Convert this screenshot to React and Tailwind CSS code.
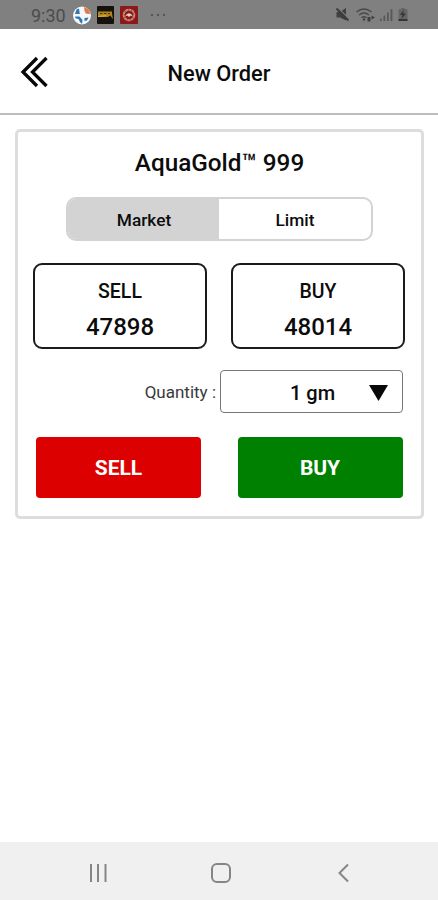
function StatusBar() {
  return (
    <div className="flex h-[29px] items-center bg-[#808080] pl-[31px] pr-[29px] text-[#4c4c4c]">
      <span className="w-[42px] pt-[2px] text-[18px] leading-none">9:30</span>
      <svg className="mt-px h-[19px] w-[18px]" viewBox="0 0 18 19">
        <circle cx="9" cy="9.5" r="9" fill="#f6f8fa" />
        <path d="M11 1l4.500 2.200L17.500 8l-4.500-.2L11.500 5z" fill="#e07b45" />
        <path d="M3.500 3.500L6 2.500l.8 5.500H2z M2 10.500h4.500l3 3.500-.5 4-2-2-1.500-3-2.800-.5z M11.500 12l4-.5-1.500 3-2.500.5z" fill="#2f76b5" />
      </svg>
      <svg className="ml-[6px] mt-px h-[18px] w-[17px]" viewBox="0 0 17 18">
        <rect width="17" height="18" rx="1" fill="#15120c" />
        <path d="M1 5.500h14v2l1 5.500-3-3.500-2 1.500H1z" fill="#b1841c" />
        <path d="M3 7.500h2.500M7 7.500h2.500M11 7.500h2" stroke="#4c3815" strokeWidth="1" />
        <path d="M1 10.500l8-.8" stroke="#dcb450" strokeWidth="1" />
      </svg>
      <svg className="ml-[6px] mt-px h-[18px] w-[18px]" viewBox="0 0 18 18">
        <rect width="18" height="18" rx="1" fill="#8c181b" />
        <circle cx="9" cy="9" r="5.300" fill="none" stroke="#c08672" strokeWidth="2" strokeDasharray="3 .4" />
        <path d="M5 10.500q4-6.500 8 0l-2.500-1-1.500 1.500-1.500-1.500z" fill="#ecd3c3" />
      </svg>
      <svg className="ml-[12px] h-[4px] w-[18px]" viewBox="0 0 18 4" fill="#555">
        <circle cx="2" cy="2" r="1.200" />
        <circle cx="8" cy="2" r="1.200" />
        <circle cx="14" cy="2" r="1.200" />
      </svg>
      <svg className="ml-auto mt-px h-[18px] w-[74px]" viewBox="0 0 74 18" fill="#404040">
        <path d="M1.500 6h3.500L11 2v12.500L5 11.500H1.500z" />
        <path d="M3 2L14.500 13.500" stroke="#808080" strokeWidth="1.300" />
        <path d="M1.500 2.500L13.500 14.500" stroke="#3a3a3a" strokeWidth="1.800" />
        <g fill="none" stroke="#484848" strokeWidth="1.400">
          <path d="M21.500 6q7.500-6 15 0M24 9q5-4 10 0M26.500 11.800q2.500-2 5 0" />
        </g>
        <circle cx="29" cy="13.500" r="1.200" />
        <path d="M32.500 11h3v4.500h-3zM36.500 9.500l3.500 2-3.500 2z" />
        <g fill="#585858">
          <path d="M45 12.500h1.700V15H45zM48.500 9.500h1.700V15h-1.700zM52 6.500h1.700V15H52z" />
          <path d="M55.500 3.200h1.900V15h-1.900z" />
        </g>
        <path d="M66 2h4v1h1.500q1 0 1 1v10q0 1-1 1h-7q-1 0-1-1V4q0-1 1-1H66z" fill="#666" />
        <path d="M69 3.500l-4 5.500h2.500l-1 4 4.500-5.500h-3zM63.500 13h9v2h-9z" fill="#353535" />
      </svg>
    </div>
  );
}

function QuoteBox({ label, price }) {
  return (
    <div className="flex h-[86px] w-[174px] flex-col items-center rounded-[9px] border-2 border-[#1b1b1b] pt-[15px]">
      <span className="text-[19.5px] font-medium leading-[24px]">{label}</span>
      <span className="mt-[9px] text-[24px] font-medium leading-[28px]">{price}</span>
    </div>
  );
}

export default function App() {
  return (
    <div className="flex h-[900px] w-[438px] flex-col overflow-hidden bg-white font-['Roboto',sans-serif] text-[#0c0c0c]">
      <StatusBar />
      <header className="grid h-[86px] grid-cols-[1fr_auto_1fr] items-center border-b-2 border-[#bdbdbd]">
        <svg className="ml-[20px] mt-[2px] h-[32px] w-[29px]" viewBox="0 0 29 32" fill="none" stroke="#080808" strokeWidth="3.300">
          <path d="M17 2L3 16l14 14M26.500 2L12.500 16l14 14" />
        </svg>
        <h1 className="pt-[5px] text-[21.800px] font-medium leading-none">New Order</h1>
      </header>

      <main className="flex-1">
        <section className="ml-[15px] mt-[14px] flex h-[390px] w-[409px] flex-col rounded-[5px] border-[3px] border-[#dddddd]">
          <h2 className="mt-[16px] text-center text-[24.300px] font-medium leading-[30px]">AquaGold™ 999</h2>

          <div className="ml-[48px] mt-[19px] flex h-[44px] w-[307px] overflow-hidden rounded-[10px] border-2 border-[#d3d3d3] text-[17.300px] font-medium">
            <button className="w-[151px] bg-[#d3d3d3] pt-[4px] pl-px">Market</button>
            <button className="flex-1 pt-[4px]">Limit</button>
          </div>

          <div className="ml-[15px] mt-[22px] flex gap-[24px]">
            <QuoteBox label="SELL" price="47898" />
            <QuoteBox label="BUY" price="48014" />
          </div>

          <div className="mr-[18px] mt-[21px] flex items-center justify-end">
            <label className="mr-[4px] pt-[3px] text-[17px] text-[#3a3a3a]">Quantity :</label>
            <div className="flex h-[43px] w-[183px] items-center rounded-[4px] border border-[#777] pl-[69px] pr-[14px] text-[20px] font-medium">
              <span className="whitespace-nowrap pt-[2px]">1 gm</span>
              <svg className="ml-auto mt-[2px] h-[16px] w-[19px]" viewBox="0 0 19 16">
                <path d="M0 0h19L9.500 16z" fill="#080808" />
              </svg>
            </div>
          </div>

          <div className="ml-[18px] mt-[24px] flex gap-[36.500px] text-[21px] font-bold text-white">
            <button className="h-[61px] w-[165px] rounded-[4px] bg-[#dc0000] pt-[3px]">SELL</button>
            <button className="h-[61px] w-[165px] rounded-[4px] bg-[#008000] pt-[3px]">BUY</button>
          </div>
        </section>
      </main>

      <nav className="flex h-[58px] items-center bg-[#f0f0f0] pt-[3px]">
        <svg className="ml-[88px] h-[20px] w-[20px]" viewBox="0 0 20 20" stroke="#858585" strokeWidth="2">
          <path d="M3 1v18M10 1v18M17.500 1v18" />
        </svg>
        <svg className="ml-[102px] h-[22px] w-[22px]" viewBox="0 0 22 22" fill="none" stroke="#858585" strokeWidth="2">
          <rect x="2" y="2" width="18" height="18" rx="5" />
        </svg>
        <svg className="ml-[105px] h-[20px] w-[13px]" viewBox="0 0 13 20" fill="none" stroke="#858585" strokeWidth="2">
          <path d="M11 1.500L2.500 10l8.500 8.500" />
        </svg>
      </nav>
    </div>
  );
}
